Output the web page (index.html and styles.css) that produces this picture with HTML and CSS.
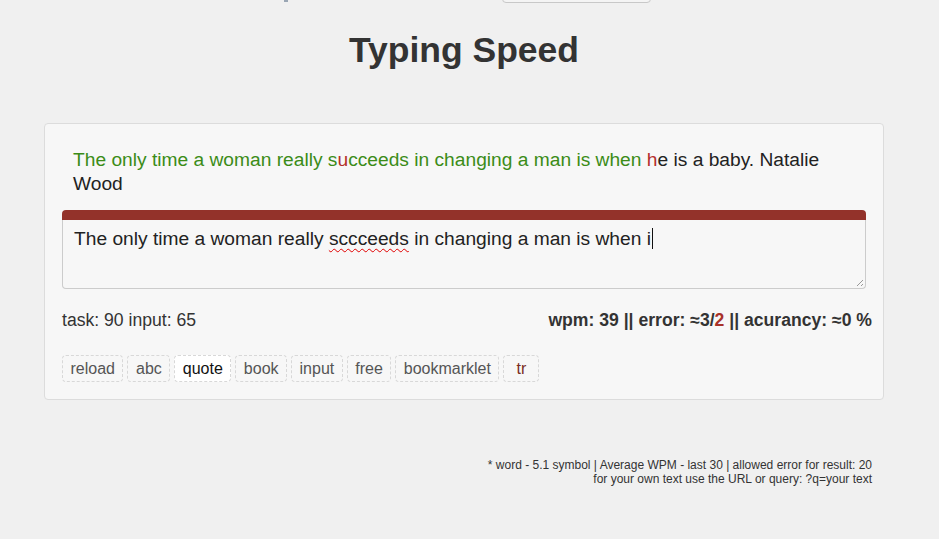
FILE: index.html
```html
<!DOCTYPE html>
<html>
<head>
<meta charset="utf-8">
<link rel="stylesheet" href="styles.css">
</head>
<body>
<div class="topbar">
  <span class="topmark"></span>
  <span class="topselect"></span>
</div>
<h1 class="title">Typing Speed</h1>
<div class="panel">
  <div class="task"><span class="ok">The only time a woman really s</span><span class="bad">u</span><span class="ok">cceeds in changing a man is when </span><span class="bad">h</span>e is a baby. Natalie Wood</div>
  <div class="bar"></div>
  <div class="input">The only time a woman really <span class="spell">sccceeds</span> in changing a man is when i<span class="caret"></span><span class="grip"></span></div>
  <div class="stats">
    <span class="counts">task: 90 input: 65</span>
    <span class="result">wpm: 39 || error: ≈3/<span class="err">2</span> || acurancy: ≈0 %</span>
  </div>
  <div class="buttons">
    <span class="btn">reload</span>
    <span class="btn">abc</span>
    <span class="btn active">quote</span>
    <span class="btn">book</span>
    <span class="btn">input</span>
    <span class="btn">free</span>
    <span class="btn">bookmarklet</span>
    <span class="btn tr">tr</span>
  </div>
</div>
<div class="footer">
  <div>* word - 5.1 symbol | Average WPM - last 30 | allowed error for result: 20</div>
  <div>for your own text use the URL or query: ?q=your text</div>
</div>
</body>
</html>
```
FILE: styles.css
```css
html, body {
  margin: 0;
  padding: 0;
  background: #f0f0f0;
  font-family: "Liberation Sans", Arial, sans-serif;
  color: #333;
}
.topbar {
  height: 4px;
  position: relative;
  overflow: hidden;
}
.topmark {
  position: absolute;
  left: 284px;
  top: -4px;
  width: 4px;
  height: 6px;
  background: #9aa6b4;
}
.topselect {
  position: absolute;
  left: 502px;
  top: -30px;
  width: 147px;
  height: 31px;
  border: 1px solid #c8c8c8;
  border-radius: 4px;
  background: #f4f4f4;
}
.title {
  margin: 24px 11px 0 0;
  height: 44px;
  line-height: 44px;
  text-align: center;
  font-size: 35.5px;
  font-weight: bold;
  color: #333;
}
.panel {
  margin: 51px 55px 0 44px;
  background: #f7f7f7;
  border: 1px solid #dcdcdc;
  border-radius: 4px;
  padding: 18px 17px 17px 17px;
}
.task {
  padding: 6px 11px 0 11px;
  font-size: 19.2px;
  line-height: 24px;
  color: #222;
}
.ok { color: #3b8c17; }
.bad { color: #b42f2a; }
.bar {
  margin-top: 14px;
  height: 10px;
  background: #93322a;
  border-radius: 4px 4px 0 0;
}
.input {
  position: relative;
  height: 57px;
  border: 1px solid #cccccc;
  border-top: none;
  border-radius: 0 0 4px 4px;
  background: #f7f7f7;
  padding: 8px 11px 3px 11px;
  font-size: 19.2px;
  line-height: 22px;
  color: #222;
}
.spell {
  text-decoration: underline wavy #e00000;
  text-decoration-thickness: 1px;
  text-underline-offset: 3px;
}
.caret {
  display: inline-block;
  width: 1px;
  height: 21px;
  background: #111;
  vertical-align: -4px;
  margin-left: 1px;
}
.grip {
  position: absolute;
  right: 2px;
  bottom: 2px;
  width: 9px;
  height: 9px;
  background: repeating-linear-gradient(135deg, transparent 0 2px, #999 2px 3px);
  clip-path: polygon(100% 0, 100% 100%, 0 100%);
}
.stats {
  display: flex;
  justify-content: space-between;
  margin-top: 20px;
  margin-right: -6px;
  font-size: 17.6px;
  line-height: 22px;
}
.counts { color: #333; }
.result { font-weight: bold; color: #333; }
.err { color: #a83229; }
.buttons {
  display: flex;
  gap: 4px;
  margin-top: 24px;
}
.btn {
  display: inline-block;
  height: 25px;
  line-height: 25px;
  padding: 0 7.5px;
  border: 1px dashed #d8d8d8;
  border-radius: 4px;
  font-size: 16px;
  color: #555;
}
.btn.active {
  background: #ffffff;
  color: #111;
}
.btn.tr {
  padding: 0 12px 0 12px;
  color: #7a2c22;
}
.footer {
  margin: 58px 67px 0 0;
  text-align: right;
  font-size: 12px;
  line-height: 14px;
  color: #333;
}
```
